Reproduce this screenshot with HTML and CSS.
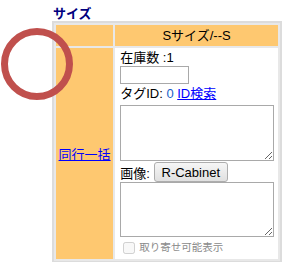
FILE: index.html
```html
<!DOCTYPE html>
<html lang="ja">
    <head>
        <meta charset="UTF-8">
        <meta name="viewport" content="width=device-width, initial-scale=1.0">
        <title>サイズ</title>
        <link rel="stylesheet" href="styles.css">
    </head>
    <body>
        <div class="page">
            <h3 class="title">サイズ</h3>
            <table class="size-table">
                <tr>
                    <td class="corner"></td>
                    <td class="size-head">Sサイズ/--S</td>
                </tr>
                <tr>
                    <td class="bulk"><a href="#">同行一括</a></td>
                    <td class="detail">
                        <div class="line">在庫数 :1</div>
                        <input type="text" class="stock-input">
                        <div class="line tag-line">タグID: <span class="tag-id">0</span> <a href="#">ID検索</a></div>
                        <textarea class="memo memo-tag"></textarea>
                        <div class="image-row">
                            <span>画像:</span>
                            <button type="button" class="cabinet-btn">R-Cabinet</button>
                        </div>
                        <textarea class="memo memo-image"></textarea>
                        <label class="order-check">
                            <input type="checkbox" disabled>
                            <span>取り寄せ可能表示</span>
                        </label>
                    </td>
                </tr>
            </table>
        </div>

        <!-- annotation ring over the table -->
        <svg class="ring" width="75" height="75" viewBox="0 0 75 75">
            <circle cx="37" cy="37" r="32.5" fill="none" stroke="#c0504d" stroke-width="7"/>
        </svg>
    </body>
</html>
```

FILE: styles.css
```css
body {
    margin: 0;
    font-family: "Liberation Sans", "Noto Sans CJK JP", sans-serif;
    font-size: 13px;
    color: #000;
    background: #fff;
}

.page {
    padding: 6px 0 0 52px;
}

.title {
    margin: 0 0 0 1px;
    font-size: 13px;
    line-height: 15px;
    font-weight: bold;
    color: #000080;
}

.size-table {
    border-collapse: separate;
    border-spacing: 2px;
    border: 2px solid #dcdcdc;
    background: #e8e8e8;
}

.size-table td {
    padding: 0;
    background: #fec870;
}

.corner {
    width: 59px;
    height: 21px;
}

.size-head {
    width: 163px;
    text-align: center;
    line-height: 16px;
}

.bulk {
    vertical-align: middle;
    text-align: center;
    height: 211px;
}

.bulk a,
.detail a {
    color: #0000ff;
}

.size-table td.detail {
    background: #fff;
    vertical-align: top;
    padding: 2px 0 0 5px;
}

.line {
    line-height: 16px;
    height: 16px;
}

.stock-input {
    display: block;
    box-sizing: border-box;
    width: 69px;
    height: 18px;
    margin: 0;
    border: 1px solid #a9a9a9;
}

.tag-line {
    margin-top: 2px;
}

.tag-id {
    color: #1a5fc8;
}

.memo {
    display: block;
    box-sizing: border-box;
    width: 154px;
    margin: 0;
    border: 1px solid #a9a9a9;
}

.memo-tag {
    height: 56px;
    margin-top: 3px;
}

.image-row {
    display: flex;
    align-items: center;
    gap: 4px;
    height: 20px;
    margin-top: 1px;
}

.cabinet-btn {
    box-sizing: border-box;
    width: 74px;
    height: 20px;
    padding: 0;
    font-family: "Liberation Sans", sans-serif;
    font-size: 13px;
    color: #000;
    background: linear-gradient(#f6f6f6, #e0e0e0);
    border: 1px solid #adadad;
    border-radius: 3px;
}

.memo-image {
    height: 55px;
}

.order-check {
    display: flex;
    align-items: center;
    gap: 4px;
    margin: 4px 0 0 3px;
    font-size: 10.5px;
    line-height: 13px;
    color: #8a8a8a;
}

.order-check input {
    width: 12px;
    height: 12px;
    margin: 0;
}

.ring {
    position: absolute;
    left: 0;
    top: 27px;
}
```
